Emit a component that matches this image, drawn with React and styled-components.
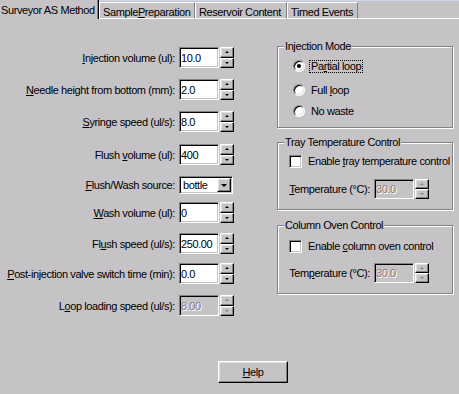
import React from "react";
import styled, { createGlobalStyle, css } from "styled-components";

const BG = "#c6c3c6";
const DARK = "#848284";
const LIGHT = "#dfdfdf";

const GlobalStyle = createGlobalStyle`
  html, body {
    margin: 0;
    padding: 0;
    background: ${BG};
  }
  body {
    font-family: "Liberation Sans", Arial, sans-serif;
    font-size: 11px;
    letter-spacing: -0.4px;
    color: #000;
  }
`;

const Dialog = styled.div`
  width: 459px;
  height: 394px;
  overflow: hidden;
  background: ${BG};
  display: flex;
  flex-direction: column;
`;

const TabBar = styled.div`
  display: flex;
  height: 19px;
  flex-shrink: 0;
  background: linear-gradient(#cdd6e8 0 1px, ${BG} 1px);
`;

const Tab = styled.div`
  box-sizing: border-box;
  display: flex;
  align-items: center;
  width: ${(p) => p.$w}px;
  white-space: nowrap;
  flex-shrink: 0;

  ${(p) =>
    p.$active
      ? css`
          height: 19px;
          padding: 0 0 0 1px;
          background: ${BG};
          border-right: 1px solid #000;
          box-shadow: inset -1px 0 0 ${DARK};
        `
      : css`
          height: 17px;
          margin-top: 2px;
          padding: 2px 0 0 3px;
          border-top: 1px solid #fff;
          border-left: 1px solid #fff;
          border-right: 1px solid ${DARK};
          border-bottom: 1px solid #fff;
        `}
`;

const TabFiller = styled.div`
  flex: 1;
  border-bottom: 1px solid #fff;
`;

const Panel = styled.div`
  flex: 1;
  display: flex;
  flex-direction: column;
`;

const Body = styled.div`
  display: flex;
`;

const LeftColumn = styled.div`
  width: 235px;
  display: flex;
  flex-direction: column;
`;

const RightColumn = styled.div`
  width: 176px;
  margin-left: 42px;
  display: flex;
  flex-direction: column;
`;

const Field = styled.div`
  display: flex;
  align-items: center;
  height: ${(p) => p.$h || 21}px;
  margin-top: ${(p) => p.$mt}px;
`;

const Label = styled.span`
  width: ${(p) => p.$w || 175}px;
  flex-shrink: 0;
  text-align: right;
  white-space: nowrap;
`;

const Sunken = styled.div`
  box-sizing: border-box;
  height: 100%;
  border: 1px solid;
  border-color: ${DARK} #fff #fff ${DARK};
  box-shadow: inset 1px 1px 0 #000, inset -1px -1px 0 ${BG};
`;

const TextBox = styled(Sunken)`
  width: ${(p) => p.$w || 40}px;
  margin-left: 4px;
  padding-left: 1px;
  display: flex;
  align-items: center;
  background: ${(p) => (p.$disabled ? BG : "#fff")};
  color: ${(p) => (p.$disabled ? DARK : "#000")};
  text-shadow: ${(p) => (p.$disabled ? "1px 1px 0 #fff" : "none")};
`;

const Combo = styled(Sunken)`
  width: 54px;
  margin-left: 4px;
  padding: 1px 1px 1px 3px;
  display: flex;
  align-items: center;
  justify-content: space-between;
  background: #fff;
`;

const Raised = styled.div`
  box-sizing: border-box;
  background: ${BG};
  border: 1px solid;
  border-color: #fff #000 #000 #fff;
  box-shadow: inset -1px -1px 0 ${DARK}, inset 1px 1px 0 ${LIGHT};
  display: flex;
  align-items: center;
  justify-content: center;
`;

const Spinner = styled.div`
  width: 14px;
  height: 100%;
  margin-left: 1px;
  display: flex;
  flex-direction: column;
`;

const SpinButton = styled(Raised)`
  flex: 1;
`;

const DropButton = styled(Raised)`
  width: 14px;
  height: 14px;
`;

const Arrow = styled.span`
  width: 0;
  height: 0;
  border-left: ${(p) => p.$size}px solid transparent;
  border-right: ${(p) => p.$size}px solid transparent;
  ${(p) =>
    p.$up
      ? css`
          border-bottom: ${Math.ceil(p.$size * 0.7)}px solid ${p.$disabled ? DARK : "#000"};
        `
      : css`
          border-top: ${Math.ceil(p.$size * 0.7)}px solid ${p.$disabled ? DARK : "#000"};
        `}
`;

const Group = styled.fieldset`
  box-sizing: border-box;
  width: 176px;
  min-width: 0;
  margin: ${(p) => p.$mt}px 0 0 0;
  padding: 0 6px ${(p) => p.$pb}px 6px;
  border: 1px solid ${DARK};
  box-shadow: inset 1px 1px 0 #fff, 1px 1px 0 #fff;
`;

const Legend = styled.legend`
  padding: 0 1px;
  line-height: 13px;
  background: ${BG};
`;

const OptionRow = styled.div`
  display: flex;
  align-items: center;
  height: 16px;
  margin-top: ${(p) => p.$mt}px;
  padding-left: ${(p) => p.$indent}px;
`;

const RadioDot = styled.span`
  box-sizing: border-box;
  width: 12px;
  height: 12px;
  border-radius: 50%;
  border: 1px solid;
  border-color: ${DARK} #fff #fff ${DARK};
  box-shadow: inset 1px 1px 0 #000, inset -1px -1px 0 ${LIGHT};
  background: #fff;
  display: flex;
  align-items: center;
  justify-content: center;
  margin-right: 4px;
  flex-shrink: 0;

  &::after {
    content: "";
    width: 4px;
    height: 4px;
    border-radius: 50%;
    background: #000;
    display: ${(p) => (p.$checked ? "block" : "none")};
  }
`;

const CheckBox = styled(Sunken)`
  width: 13px;
  height: 13px;
  background: #fff;
  margin-right: 4px;
  flex-shrink: 0;
`;

const OptionText = styled.span`
  white-space: nowrap;
  line-height: 11px;
  padding: 0 1px;
  border: 1px dotted ${(p) => (p.$focus ? "#000" : "transparent")};
`;

const Footer = styled.div`
  margin-top: auto;
  padding: 0 0 11px 218px;
`;

const Button = styled.button`
  box-sizing: border-box;
  width: 70px;
  height: 22px;
  padding: 0;
  font: inherit;
  letter-spacing: inherit;
  color: #000;
  background: ${BG};
  border: 1px solid;
  border-color: #fff #000 #000 #fff;
  box-shadow: inset -1px -1px 0 ${DARK}, inset 1px 1px 0 ${LIGHT};
`;

const SpinBox = ({ value, disabled, w }) => (
  <>
    <TextBox $w={w} $disabled={disabled}>{value}</TextBox>
    <Spinner>
      <SpinButton>
        <Arrow $up $size={2} $disabled={disabled} />
      </SpinButton>
      <SpinButton>
        <Arrow $size={2} $disabled={disabled} />
      </SpinButton>
    </Spinner>
  </>
);

const fields = [
  { mt: 28, label: <><u>I</u>njection volume (ul):</>, value: "10.0" },
  { mt: 11, label: <><u>N</u>eedle height from bottom (mm):</>, value: "2.0" },
  { mt: 11, label: <><u>S</u>yringe speed (ul/s):</>, value: "8.0" },
  { mt: 12, label: <>Flush <u>v</u>olume (ul):</>, value: "400" },
  { mt: 11, label: <><u>F</u>lush/Wash source:</>, combo: "bottle" },
  { mt: 8, label: <><u>W</u>ash volume (ul):</>, value: "0" },
  { mt: 10, label: <>Fl<u>u</u>sh speed (ul/s):</>, value: "250.00" },
  { mt: 9, label: <><u>P</u>ost-injection valve switch time (min):</>, value: "0.0" },
  { mt: 11, label: <>L<u>o</u>op loading speed (ul/s):</>, value: "8.00", disabled: true },
];

export default function App() {
  return (
    <>
      <GlobalStyle />
      <Dialog>
        <TabBar>
          <Tab $active $w={99}>Surveyor AS Method</Tab>
          <Tab $w={96}>Sample <u>P</u>reparation</Tab>
          <Tab $w={92}>Reservoir Content</Tab>
          <Tab $w={71}>Timed Events</Tab>
          <TabFiller />
        </TabBar>
        <Panel>
          <Body>
            <LeftColumn>
              {fields.map((f, i) => (
                <Field key={i} $mt={f.mt} $h={f.combo ? 18 : 21}>
                  <Label>{f.label}</Label>
                  {f.combo ? (
                    <Combo>
                      {f.combo}
                      <DropButton>
                        <Arrow $size={3} />
                      </DropButton>
                    </Combo>
                  ) : (
                    <SpinBox value={f.value} disabled={f.disabled} />
                  )}
                </Field>
              ))}
            </LeftColumn>
            <RightColumn>
              <Group $mt={21} $pb={8}>
                <Legend>Injection Mode</Legend>
                <OptionRow $mt={5} $indent={9}>
                  <RadioDot $checked />
                  <OptionText $focus>Pa<u>r</u>tial loop</OptionText>
                </OptionRow>
                <OptionRow $mt={8} $indent={9}>
                  <RadioDot />
                  <OptionText>Full <u>l</u>oop</OptionText>
                </OptionRow>
                <OptionRow $mt={5} $indent={9}>
                  <RadioDot />
                  <OptionText>No waste</OptionText>
                </OptionRow>
              </Group>

              <Group $mt={8} $pb={10}>
                <Legend>Tray Temperature Control</Legend>
                <OptionRow $mt={4} $indent={5}>
                  <CheckBox />
                  <OptionText>Enable <u>t</u>ray temperature control</OptionText>
                </OptionRow>
                <Field $mt={10} $h={20}>
                  <Label $w={86}><u>T</u>emperature (°C):</Label>
                  <SpinBox value="30.0" disabled />
                </Field>
              </Group>

              <Group $mt={9} $pb={10}>
                <Legend>Column Oven Control</Legend>
                <OptionRow $mt={6} $indent={5}>
                  <CheckBox />
                  <OptionText>Enable <u>c</u>olumn oven control</OptionText>
                </OptionRow>
                <Field $mt={9} $h={20}>
                  <Label $w={86}>Tem<u>p</u>erature (°C):</Label>
                  <SpinBox value="30.0" disabled />
                </Field>
              </Group>
            </RightColumn>
          </Body>
          <Footer>
            <Button>
              <u>H</u>elp
            </Button>
          </Footer>
        </Panel>
      </Dialog>
    </>
  );
}
